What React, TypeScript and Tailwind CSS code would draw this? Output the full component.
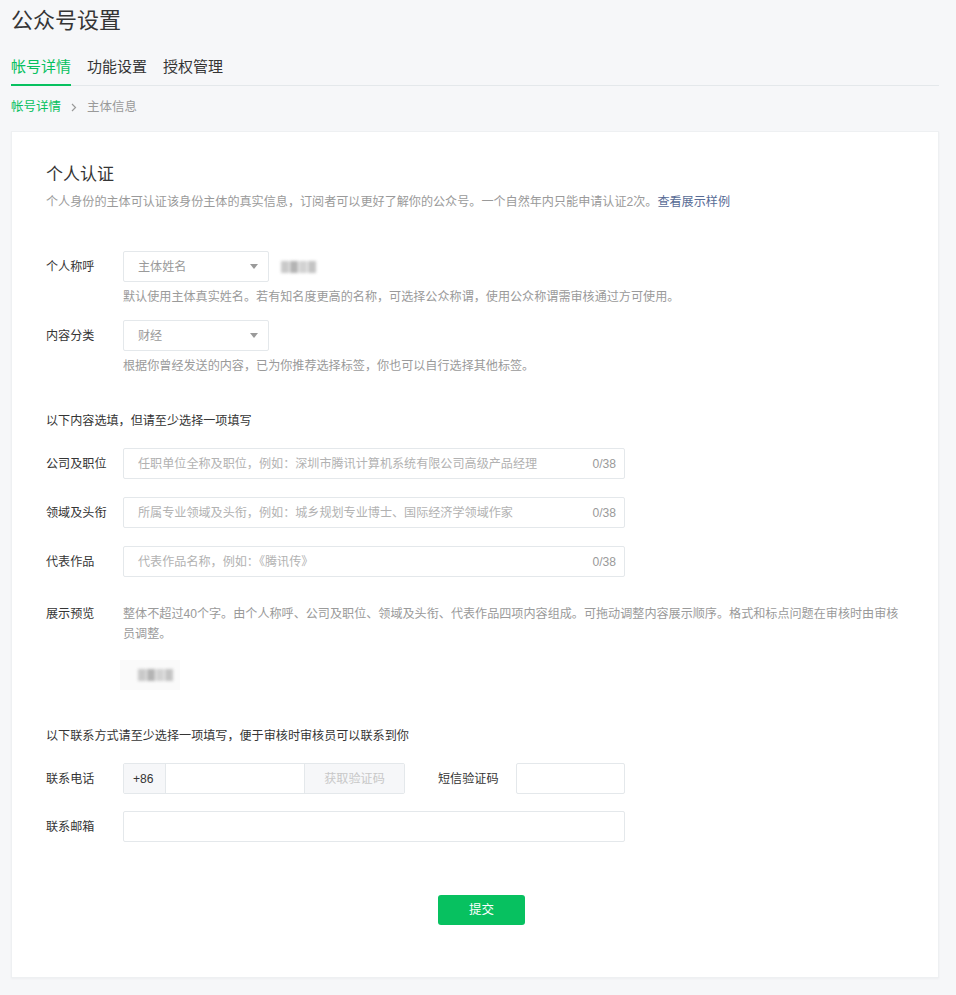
const font = { fontFamily: '"Liberation Sans", "Noto Sans CJK SC", sans-serif' };

const Arrow = () => (
    <svg width="8" height="5" viewBox="0 0 8 5" className="text-[#9a9a9a]">
        <path d="M0 0 L8 0 L4 5 Z" fill="currentColor" />
    </svg>
);

const Chevron = () => (
    <svg width="6" height="9" viewBox="0 0 6 9" className="text-[#9a9a9a]">
        <path d="M1 1 L4.5 4.5 L1 8" fill="none" stroke="currentColor" strokeWidth="1.2" />
    </svg>
);

const Select = ({ value }: { value: string }) => (
    <div className="w-[146px] h-[31px] flex items-center justify-between pl-[14px] pr-[10px] border border-[#e4e8eb] rounded-[2px] bg-white text-[#9a9a9a]">
        <span>{value}</span>
        <Arrow />
    </div>
);

const Blur = ({ className }: { className: string }) => (
    <div className={`flex items-center gap-[1px] blur-[1.5px] ${className}`}>
        <span className="w-[8px] h-[12px] bg-[#c9c9c9]" />
        <span className="w-[8px] h-[12px] bg-[#b4b4b4]" />
        <span className="w-[8px] h-[12px] bg-[#d2d2d2]" />
        <span className="w-[8px] h-[12px] bg-[#c4c4c4]" />
    </div>
);

const Label = ({ text }: { text: string }) => (
    <div className="w-[77px] shrink-0 text-[#353535]">{text}</div>
);

const CountInput = ({ placeholder }: { placeholder: string }) => (
    <div className="w-[502px] h-[31px] flex items-center justify-between pl-[14px] pr-[8px] border border-[#e4e8eb] rounded-[2px] bg-white">
        <span className="text-[#b2b2b2]">{placeholder}</span>
        <span className="text-[#9a9a9a]">0/38</span>
    </div>
);

export default function App() {
    return (
        <div style={font} className="min-h-screen bg-[#f6f7f9] pl-[11px] pb-[18px] text-[12.1px] leading-[20px]">
            <div className="w-[928px]">
                <h1 className="pt-[6px] text-[22px] leading-[30px] text-[#353535]">公众号设置</h1>

                <div className="mt-[20px] flex gap-[16px] border-b border-[#e4e8eb] text-[15px] leading-[22px]">
                    <div className="pb-[5px] -mb-[1px] border-b-[2px] border-[#07c160] text-[#07c160]">帐号详情</div>
                    <div className="pb-[7px] text-[#353535]">功能设置</div>
                    <div className="pb-[7px] text-[#353535]">授权管理</div>
                </div>

                <div className="mt-[11px] flex items-center text-[12.5px]">
                    <span className="text-[#07c160]">帐号详情</span>
                    <span className="ml-[10px]"><Chevron /></span>
                    <span className="ml-[10px] text-[#9a9a9a]">主体信息</span>
                </div>

                <div className="mt-[14px] bg-white border border-[#eef0f2] shadow-[0_1px_2px_rgba(0,0,0,0.04)] px-[34px] pt-[30px] pb-[52px]">
                    <h2 className="text-[17px] leading-[26px] text-[#353535]">个人认证</h2>
                    <p className="mt-[4px] text-[#9a9a9a]">
                        个人身份的主体可认证该身份主体的真实信息，订阅者可以更好了解你的公众号。一个自然年内只能申请认证2次。
                        <span className="text-[#576b95]">查看展示样例</span>
                    </p>

                    <div className="mt-[39px] flex items-center">
                        <Label text="个人称呼" />
                        <Select value="主体姓名" />
                        <Blur className="ml-[12px]" />
                    </div>
                    <p className="mt-[5px] ml-[77px] text-[#9a9a9a]">默认使用主体真实姓名。若有知名度更高的名称，可选择公众称谓，使用公众称谓需审核通过方可使用。</p>

                    <div className="mt-[13px] flex items-center">
                        <Label text="内容分类" />
                        <Select value="财经" />
                    </div>
                    <p className="mt-[5px] ml-[77px] text-[#9a9a9a]">根据你曾经发送的内容，已为你推荐选择标签，你也可以自行选择其他标签。</p>

                    <p className="mt-[35px] text-[#353535]">以下内容选填，但请至少选择一项填写</p>

                    <div className="mt-[17px] flex flex-col gap-[18px]">
                        <div className="flex items-center">
                            <Label text="公司及职位" />
                            <CountInput placeholder="任职单位全称及职位，例如：深圳市腾讯计算机系统有限公司高级产品经理" />
                        </div>
                        <div className="flex items-center">
                            <Label text="领域及头衔" />
                            <CountInput placeholder="所属专业领域及头衔，例如：城乡规划专业博士、国际经济学领域作家" />
                        </div>
                        <div className="flex items-center">
                            <Label text="代表作品" />
                            <CountInput placeholder="代表作品名称，例如：《腾讯传》" />
                        </div>
                    </div>

                    <div className="mt-[27px] flex">
                        <Label text="展示预览" />
                        <div className="flex-1">
                            <p className="text-[#9a9a9a]">整体不超过40个字。由个人称呼、公司及职位、领域及头衔、代表作品四项内容组成。可拖动调整内容展示顺序。格式和标点问题在审核时由审核员调整。</p>
                            <div className="mt-[16px] -ml-[3px] w-[60px] h-[30px] bg-[#fafafa] flex items-center pl-[18px]">
                                <Blur className="" />
                            </div>
                        </div>
                    </div>

                    <p className="mt-[36px] text-[#353535]">以下联系方式请至少选择一项填写，便于审核时审核员可以联系到你</p>

                    <div className="mt-[17px] flex items-center">
                        <Label text="联系电话" />
                        <div className="flex h-[31px] w-[282px] border border-[#e4e8eb] rounded-[2px]">
                            <div className="w-[42px] bg-[#f6f7f9] border-r border-[#e4e8eb] flex items-center pl-[9px] text-[#353535]">+86</div>
                            <div className="flex-1 bg-white" />
                            <div className="w-[100px] bg-[#f6f7f9] border-l border-[#e4e8eb] flex items-center justify-center text-[#c8c8c8]">获取验证码</div>
                        </div>
                        <span className="ml-[33px] w-[78px] text-[#353535]">短信验证码</span>
                        <div className="w-[109px] h-[31px] border border-[#e4e8eb] rounded-[2px] bg-white" />
                    </div>

                    <div className="mt-[17px] flex items-center">
                        <Label text="联系邮箱" />
                        <div className="w-[502px] h-[31px] border border-[#e4e8eb] rounded-[2px] bg-white" />
                    </div>

                    <div className="mt-[53px] ml-[392px]">
                        <button className="w-[87px] h-[30px] rounded-[3px] bg-[#07c160] text-white text-[12.5px]">提交</button>
                    </div>
                </div>
            </div>
        </div>
    );
}
